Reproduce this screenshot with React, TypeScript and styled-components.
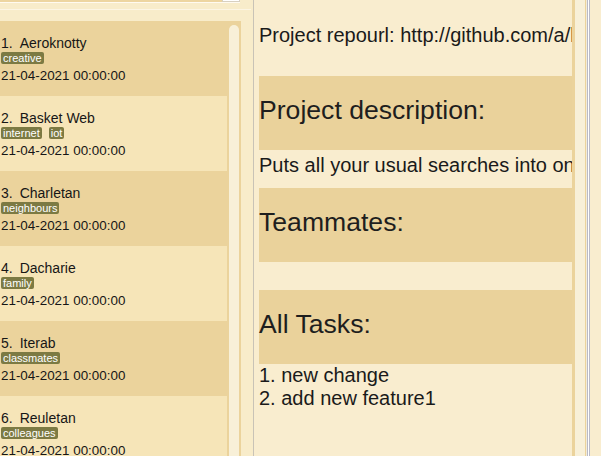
import React from "react";
import styled, { createGlobalStyle } from "styled-components";

const GlobalStyle = createGlobalStyle`
  html, body { margin: 0; padding: 0; }
  body {
    background: #f9edcf;
    font-family: "Liberation Sans", Arial, sans-serif;
    color: #1c1c1c;
    overflow: hidden;
  }
`;

const Window = styled.div`
  display: flex;
  width: 601px;
  height: 456px;
  overflow: hidden;
  background: #f9edcf;
`;

const LeftPanel = styled.div`
  width: 253px;
  flex: none;
  display: flex;
  flex-direction: column;
  background: #f8ecca;
`;

const InputRow = styled.div`
  display: flex;
  width: 240px;
  height: 3px;
  border-bottom: 1px solid #fffaf0;
  box-sizing: border-box;
`;

const InputField = styled.div`
  flex: 1;
  background: #edd5a0;
`;

const InputButton = styled.div`
  width: 18px;
  background: #ffffff;
  border: 1px solid #d8d0c0;
  border-top: none;
  box-sizing: border-box;
`;

const Separator = styled.div`
  width: 251px;
  height: 1px;
  margin-top: 6px;
  background: #fcf5e3;
`;

const ListBox = styled.div`
  margin-top: 11px;
  width: 241px;
  flex: 1;
  display: flex;
  background: #ebd39c;
  overflow: hidden;
`;

const List = styled.div`
  width: 227px;
  display: flex;
  flex-direction: column;
`;

const Item = styled.div<{ $alt: boolean }>`
  height: 75px;
  flex: none;
  box-sizing: border-box;
  padding: 14px 0 0 1px;
  background: ${(p) => (p.$alt ? "#f6e5b8" : "#ebd39c")};
  display: flex;
  flex-direction: column;
`;

const TitleRow = styled.div`
  display: flex;
  gap: 7px;
  font-size: 14px;
  line-height: 16px;
  color: #161616;
  white-space: nowrap;
`;

const Tags = styled.div`
  display: flex;
  gap: 7px;
  margin-top: 1px;
  height: 12px;
`;

const Tag = styled.span`
  display: inline-block;
  height: 12px;
  line-height: 12px;
  padding: 0 2px;
  font-size: 11px;
  background: #7c7a43;
  color: #ffffff;
  border-radius: 2px;
`;

const DateText = styled.div`
  margin-top: 4px;
  font-size: 13.4px;
  line-height: 16px;
  color: #161616;
  white-space: nowrap;
`;

const ScrollGutter = styled.div`
  flex: 1;
  display: flex;
  justify-content: center;
  padding-top: 4px;
`;

const ScrollThumb = styled.div`
  width: 10px;
  height: 500px;
  background: #f8f0d8;
  border-radius: 5px 5px 0 0;
`;

const Divider = styled.div`
  width: 1px;
  flex: none;
  background: #c9c3b6;
`;

const Detail = styled.div`
  width: 318px;
  flex: none;
  box-sizing: border-box;
  padding: 24px 0 0 5px;
  display: flex;
  flex-direction: column;
  overflow: hidden;
  background: #f9edcf;
`;

const Line = styled.div`
  font-size: 20px;
  line-height: 23px;
  white-space: nowrap;
  color: #1a1a1a;
`;

const RepoLine = styled(Line)`
  margin-bottom: 29px;
`;

const DescLine = styled(Line)`
  padding: 4px 0 11px;
`;

const Section = styled.div`
  height: 74px;
  flex: none;
  box-sizing: border-box;
  padding-top: 19px;
  background: #ead29b;
`;

const Heading = styled.div`
  font-size: 26.6px;
  line-height: 31px;
  white-space: nowrap;
  color: #1e1e1e;
`;

const EmptyList = styled.div`
  height: 28px;
  flex: none;
`;

const Edge = styled.div`
  display: flex;
  flex: none;
`;

const Stripe = styled.div<{ $w: number; $c: string }>`
  width: ${(p) => p.$w}px;
  background: ${(p) => p.$c};
`;

const Rest = styled.div`
  flex: 1;
  background: #f9edcf;
`;

const projects = [
  { name: "Aeroknotty", tags: ["creative"] },
  { name: "Basket Web", tags: ["internet", "iot"] },
  { name: "Charletan", tags: ["neighbours"] },
  { name: "Dacharie", tags: ["family"] },
  { name: "Iterab", tags: ["classmates"] },
  { name: "Reuletan", tags: ["colleagues"] },
];

export default function App() {
  return (
    <>
      <GlobalStyle />
      <Window>
        <LeftPanel>
          <InputRow>
            <InputField />
            <InputButton />
          </InputRow>
          <Separator />
          <ListBox>
            <List>
              {projects.map((p, i) => (
                <Item key={p.name} $alt={i % 2 === 1}>
                  <TitleRow>
                    <span>{i + 1}.</span>
                    <span>{p.name}</span>
                  </TitleRow>
                  <Tags>
                    {p.tags.map((t) => (
                      <Tag key={t}>{t}</Tag>
                    ))}
                  </Tags>
                  <DateText>21-04-2021 00:00:00</DateText>
                </Item>
              ))}
            </List>
            <ScrollGutter>
              <ScrollThumb />
            </ScrollGutter>
          </ListBox>
        </LeftPanel>
        <Divider />
        <Detail>
          <RepoLine>Project repourl: http://github.com/a/b</RepoLine>
          <Section>
            <Heading>Project description:</Heading>
          </Section>
          <DescLine>Puts all your usual searches into one place</DescLine>
          <Section>
            <Heading>Teammates:</Heading>
          </Section>
          <EmptyList />
          <Section>
            <Heading>All Tasks:</Heading>
          </Section>
          <Line>1. new change</Line>
          <Line>2. add new feature1</Line>
        </Detail>
        <Edge>
          <Stripe $w={3} $c="#ebd39c" />
          <Stripe $w={10} $c="#f8f0d8" />
          <Stripe $w={1} $c="#ebd39c" />
          <Stripe $w={1} $c="#f3ecd8" />
          <Stripe $w={1} $c="#b9bac6" />
          <Stripe $w={1} $c="#ffffff" />
          <Stripe $w={1} $c="#b9bac6" />
        </Edge>
        <Rest />
      </Window>
    </>
  );
}
